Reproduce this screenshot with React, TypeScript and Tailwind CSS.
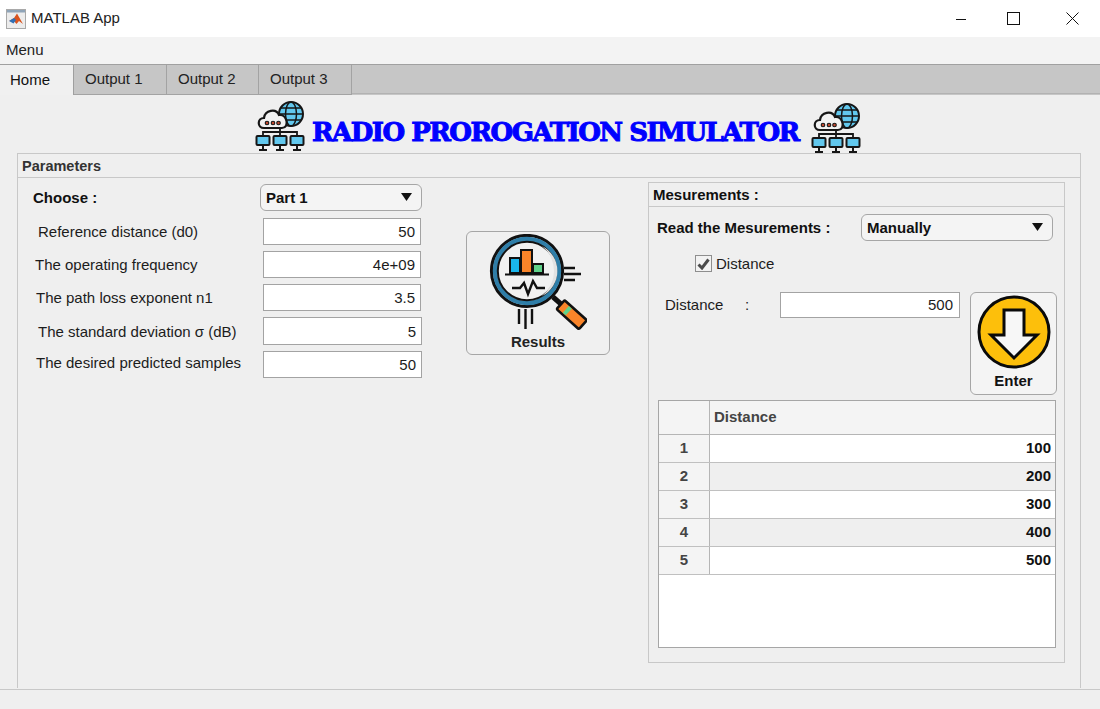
const params = [
  { label: "Reference distance (d0)", value: "50", labelPad: "pl-[20px]", h: "h-[27px]", w: "w-[158px]", gap: "mt-[7px]", lift: "" },
  { label: "The operating frequency", value: "4e+09", labelPad: "pl-[17px]", h: "h-[27px]", w: "w-[158px]", gap: "mt-[6px]", lift: "" },
  { label: "The path loss exponent n1", value: "3.5", labelPad: "pl-[18px]", h: "h-[27px]", w: "w-[158px]", gap: "mt-[6px]", lift: "" },
  { label: "The standard deviation σ (dB)", value: "5", labelPad: "pl-[20px]", h: "h-[28px]", w: "w-[159px]", gap: "mt-[6px]", lift: "" },
  { label: "The desired predicted samples", value: "50", labelPad: "pl-[18px]", h: "h-[27px]", w: "w-[159px]", gap: "mt-[6px]", lift: "mb-[5px]" },
];

const tabs = ["Output 1", "Output 2", "Output 3"];
const tabWidths = ["w-[93px]", "w-[92px]", "w-[93px]"];
const rows = ["100", "200", "300", "400", "500"];

function MatlabIcon() {
  return (
    <svg width="20" height="20" viewBox="0 0 20 20">
      <rect x="0.5" y="0.5" width="19" height="19" fill="#ececec" stroke="#a9a9a9" />
      <rect x="1" y="1" width="18" height="2.5" fill="#8fa4b8" />
      <path d="M3 12 L8 9 L11 4.5 L13 8 L17 15 L13 12 L10.5 15 L7.5 11.5 Z" fill="#d9531e" />
      <path d="M3 12 L8 9 L10 11 L7.5 14.5 Z" fill="#2f6fb5" />
    </svg>
  );
}

function NetworkIcon() {
  return (
    <svg width="50" height="50" viewBox="0 0 50 50" fill="none" stroke="#161616" strokeWidth="2">
      <circle cx="36" cy="13" r="12" fill="#62c8ee" />
      <ellipse cx="36" cy="13" rx="5.5" ry="12" strokeWidth="1.5" />
      <path d="M24 13 H48 M26 7 H46 M26 19 H46" strokeWidth="1.5" />
      <path d="M9 27 C2 27 2 17 9 17 C10 9 21 7 24 14 C32 13 35 27 27 27 Z" fill="#f2f2f2" strokeWidth="2.2" />
      <circle cx="12" cy="22" r="1.8" fill="#c0492f" strokeWidth="1.1" />
      <circle cx="18" cy="22" r="1.8" fill="#c0492f" strokeWidth="1.1" />
      <circle cx="23.5" cy="22" r="1.8" fill="#c0492f" strokeWidth="1.1" />
      <path d="M25 27 V35 M8 35 V31 H42 V35" strokeWidth="1.8" />
      {[1.5, 18.5, 35.5].map((x) => (
        <g key={x}>
          <rect x={x} y="35" width="13" height="9" rx="1" fill="#62c8ee" />
          <path d={`M${x + 6.5} 44 V48 M${x + 2.5} 49 H${x + 10.5}`} />
        </g>
      ))}
    </svg>
  );
}

function ResultsIcon() {
  return (
    <svg width="100" height="100" viewBox="0 0 100 100" fill="none">
      <circle cx="40" cy="37" r="35.5" fill="#f1f1f1" stroke="#111" strokeWidth="3.2" />
      <circle cx="40" cy="37" r="32" stroke="#2f7ea8" strokeWidth="4.4" />
      <circle cx="40" cy="37" r="29.2" stroke="#111" strokeWidth="2" />
      <path d="M55 12 A28 28 0 0 1 55 62 A32 32 0 0 0 55 12 Z" fill="#e2e2e2" />
      <rect x="23" y="24" width="10" height="15" fill="#19b5ec" stroke="#111" strokeWidth="2" />
      <rect x="34" y="16" width="11" height="23" fill="#f98429" stroke="#111" strokeWidth="2" />
      <rect x="46" y="30" width="10" height="9" fill="#5fd38a" stroke="#111" strokeWidth="2" />
      <path d="M18 40.5 H62" stroke="#111" strokeWidth="2.2" />
      <path d="M25 54 H33 L37 49 L41 60 L46 47 L50 54 L58 54" stroke="#111" strokeWidth="2.4" />
      <path d="M77 34 H88 M77 40 H94 M77 46 H88 M32 75 V90 M38.5 75 V95 M45 75 V90" stroke="#111" strokeWidth="2.4" />
      <path d="M66 63 L74 70" stroke="#111" strokeWidth="5" />
      <g transform="rotate(42 84 80)">
        <rect x="70" y="74" width="30" height="12" rx="1.5" fill="#f98429" stroke="#111" strokeWidth="2.6" />
        <rect x="77" y="75.5" width="4" height="9" fill="#5fd38a" />
      </g>
    </svg>
  );
}

function EnterIcon() {
  return (
    <svg width="74" height="74" viewBox="-37 -37 74 74">
      <circle r="35" fill="#fdbf0b" stroke="#0a0a0a" strokeWidth="3" />
      <path d="M-10 -22 H10 V3 H23 L0 26 L-23 3 H-10 Z" fill="#f7f7f7" stroke="#0a0a0a" strokeWidth="3" strokeLinejoin="miter" />
    </svg>
  );
}

function Dropdown({ label, width }: { label: string; width: string }) {
  return (
    <div className={`${width} h-[27px] shrink-0 flex items-center justify-between pl-[5px] pr-[9px] rounded-[6px] border border-[#a6a6a6] bg-[#f4f4f4] font-bold text-[#111]`}>
      <span className="pt-[2px]">{label}</span>
      <svg width="11" height="8" viewBox="0 0 11 8" className="mb-[2px]">
        <path d="M0 0 H11 L5.5 8 Z" fill="#111" />
      </svg>
    </div>
  );
}

export default function App() {
  return (
    <div className="w-[1100px] h-[709px] flex flex-col overflow-hidden bg-[#efefef] text-[15px] text-[#1c1c1c] font-['Liberation_Sans',Arial,sans-serif]">
      {/* window title */}
      <div className="h-[37px] bg-white flex items-center shrink-0">
        <div className="ml-[6px]">
          <MatlabIcon />
        </div>
        <span className="ml-[5px] text-[#222]">MATLAB App</span>
        <div className="ml-auto flex items-center">
          <svg width="12" height="12" viewBox="0 0 12 12" className="mr-[40px]">
            <path d="M1 6.5 H11" stroke="#111" />
          </svg>
          <svg width="13" height="13" viewBox="0 0 13 13" className="mr-[46px]">
            <rect x="0.5" y="0.5" width="12" height="12" fill="none" stroke="#111" />
          </svg>
          <svg width="13" height="13" viewBox="0 0 13 13" className="mr-[21px]">
            <path d="M0.5 0.5 L12.5 12.5 M12.5 0.5 L0.5 12.5" stroke="#111" />
          </svg>
        </div>
      </div>

      {/* menu */}
      <div className="h-[27px] shrink-0 bg-[#f3f3f3] pl-[6px] flex items-center text-[#222]">Menu</div>

      {/* tabs */}
      <div className="h-[31px] shrink-0 flex items-start border-t border-[#a0a0a0] bg-[#c6c6c6]">
        <div className="w-[74px] h-[30px] bg-[#f0f0f0] border-r border-[#9f9f9f] pl-[10px] flex items-center text-[#111]">Home</div>
        {tabs.map((t, i) => (
          <div key={t} className={`${tabWidths[i]} h-[30px] border-r border-b border-[#a3a3a3] pl-[11px] flex items-center text-[#222]`}>
            {t}
          </div>
        ))}
        <div className="flex-1 h-[29px] border-b border-[#b2b2b2]" />
      </div>

      {/* banner */}
      <div className="h-[58px] shrink-0 flex items-start pl-[255px]">
        <div className="mt-[6px]">
          <NetworkIcon />
        </div>
        <div className="w-[488px] ml-[7px] mt-[21px] h-[32px] leading-[32px] whitespace-nowrap font-['DejaVu_Serif',serif] font-bold text-[26px] tracking-[-1.5px] text-[#0000ff] [-webkit-text-stroke:1px_#0000ff]">
          RADIO PROROGATION SIMULATOR
        </div>
        <div className="ml-[11px] mt-[8px]">
          <NetworkIcon />
        </div>
      </div>

      {/* parameters panel */}
      <div className="ml-[17px] w-[1064px] h-[535px] shrink-0 border-x border-t border-[#c8c8c8] flex flex-col">
        <div className="h-[24px] shrink-0 border-b border-[#c8c8c8] pl-[4px] pt-[3px] flex items-center font-bold text-[14.5px] text-[#333]">Parameters</div>
        <div className="flex-1 flex items-start">
          {/* left column */}
          <div className="w-[405px] shrink-0 pt-[6px]">
            <div className="flex items-center h-[27px]">
              <span className="w-[242px] pl-[15px] pt-[2px] font-bold text-[#111]">Choose :</span>
              <Dropdown label="Part 1" width="w-[162px]" />
            </div>
            {params.map((p) => (
              <div key={p.label} className={`flex items-center ${p.gap} ${p.h}`}>
                <span className={`w-[245px] whitespace-nowrap pt-[2px] ${p.labelPad} ${p.lift}`}>{p.label}</span>
                <div className={`${p.w} ${p.h} bg-white border border-[#a3a3a3] flex items-center justify-end pr-[5px] pt-[2px]`}>{p.value}</div>
              </div>
            ))}
          </div>

          {/* results button */}
          <div className="ml-[43px] mt-[53px] w-[144px] h-[124px] shrink-0 rounded-[6px] border border-[#a6a6a6] bg-[#f0f0f0] flex flex-col items-center">
            <div className="mt-[2px] mr-[2px] h-[96px]">
              <ResultsIcon />
            </div>
            <span className="font-bold mt-[1px] text-[#222]">Results</span>
          </div>

          {/* measurements panel */}
          <div className="ml-[38px] mt-[4px] w-[417px] h-[481px] shrink-0 border border-[#c8c8c8] flex flex-col">
            <div className="h-[24px] shrink-0 border-b border-[#c8c8c8] pl-[4px] pt-[2px] flex items-center font-bold text-[#111]">Mesurements :</div>
            <div className="mt-[7px] flex items-center">
              <span className="w-[212px] pl-[8px] pt-[2px] font-bold text-[#111]">Read the Mesurements :</span>
              <Dropdown label="Manually" width="w-[192px]" />
            </div>
            <div className="mt-[14px] ml-[46px] flex items-center h-[17px]">
              <div className="w-[17px] h-[17px] bg-[#f2f2f2] border border-[#8e8e8e] flex items-center justify-center">
                <svg width="13" height="12" viewBox="0 0 13 12">
                  <path d="M1.5 6.5 L5 10 L11.5 1.5" fill="none" stroke="#4a4a4a" strokeWidth="3" />
                </svg>
              </div>
              <span className="ml-[4px] pt-[2px]">Distance</span>
            </div>
            <div className="mt-[20px] flex items-start">
              <div className="flex items-center h-[26px]">
                <span className="w-[96px] pl-[16px]">Distance</span>
                <span className="w-[35px]">:</span>
                <div className="w-[180px] h-[26px] bg-white border border-[#a3a3a3] flex items-center justify-end pr-[6px]">500</div>
              </div>
              <div className="ml-[10px] w-[87px] h-[103px] rounded-[6px] border border-[#a6a6a6] bg-[#f4f4f4] flex flex-col items-center">
                <div className="mt-[2px] h-[74px]">
                  <EnterIcon />
                </div>
                <span className="mt-[1px] font-bold text-[#111]">Enter</span>
              </div>
            </div>

            {/* distance table */}
            <div className="mt-[5px] ml-[9px] w-[398px] h-[248px] border border-[#a6a6a6] bg-white font-bold">
              <div className="flex h-[34px] bg-[#f4f4f4] border-b border-[#b5b5b5]">
                <div className="w-[51px] border-r border-[#b5b5b5]" />
                <div className="pl-[4px] flex items-center text-[#444]">Distance</div>
              </div>
              {rows.map((r, i) => (
                <div key={r} className={`flex h-[28px] border-b border-[#c0c0c0] ${i % 2 === 1 ? "bg-[#efefef]" : "bg-white"}`}>
                  <div className="w-[51px] bg-[#f4f4f4] border-r border-[#b5b5b5] flex items-center justify-center text-[#444]">{i + 1}</div>
                  <div className="flex-1 flex items-center justify-end pr-[4px] text-[#111]">{r}</div>
                </div>
              ))}
            </div>
          </div>
        </div>
      </div>

      {/* status bar */}
      <div className="mt-[1px] flex-1 border-t border-[#c8c8c8]" />
    </div>
  );
}
